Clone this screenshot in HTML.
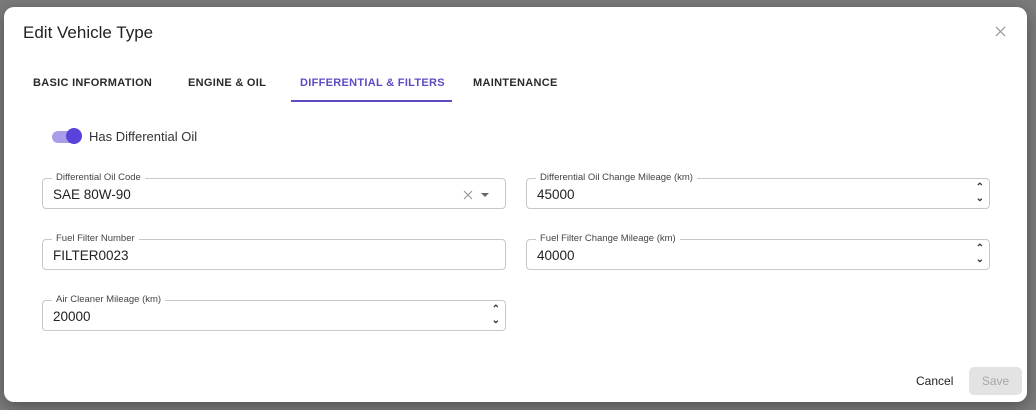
<!DOCTYPE html>
<html><head><style>
body{margin:0;width:1036px;height:410px;background:#7b7b7b;position:relative;overflow:hidden;font-family:"Liberation Sans",sans-serif;color:#1f1f1f}
.dlg{position:absolute;left:4px;top:7px;width:1023px;height:395px;background:#fff;border-radius:10px;box-shadow:0 4px 16px rgba(0,0,0,.35)}
.title{position:absolute;left:19px;top:16px;font-size:17px;color:#222}
.close{position:absolute;left:991px;top:19px}
.tab{position:absolute;top:70px;font-size:11px;font-weight:bold;color:#2a2a2a;letter-spacing:.3px}
.ind{position:absolute;left:287px;top:93px;width:161px;height:2px;background:#5b4cc4}
.sw{position:absolute;left:48px;top:124px;width:28px;height:12px;border-radius:6px;background:#a89ee8}
.knob{position:absolute;left:62px;top:121px;width:16px;height:16px;border-radius:50%;background:#5a43d8}
.swl{position:absolute;left:85px;top:122px;font-size:13px;color:#333}
.f{position:absolute;height:31px;border:1px solid #c8c8c8;border-radius:4px;box-sizing:border-box}
.f label{position:absolute;left:9px;top:-7px;background:#fff;padding:0 4px;font-size:9.5px;color:#444}
.f .v{position:absolute;left:10px;top:8px;font-size:13.5px;color:#222}
.sp{position:absolute;right:5px;top:3px;font-size:10px;line-height:11px;color:#333;font-weight:bold}
.btn{position:absolute;font-size:12px}
</style></head><body>
<div class="dlg">
<div class="title">Edit Vehicle Type</div>
<svg class="close" width="11" height="11" viewBox="0 0 12 12"><path d="M1 1L11 11M11 1L1 11" stroke="#999" stroke-width="1.3"/></svg>
<div class="tab" style="left:29px">BASIC INFORMATION</div>
<div class="tab" style="left:184px">ENGINE &amp; OIL</div>
<div class="tab" style="left:296px;color:#5b4cc4">DIFFERENTIAL &amp; FILTERS</div>
<div class="tab" style="left:469px">MAINTENANCE</div>
<div class="ind"></div>
<div class="sw"></div><div class="knob"></div>
<div class="swl">Has Differential Oil</div>
<div class="f" style="left:38px;top:171px;width:464px"><label>Differential Oil Code</label><div class="v">SAE 80W-90</div>
<svg style="position:absolute;left:420px;top:11px" width="10" height="10" viewBox="0 0 10 10"><path d="M1 1L9 9M9 1L1 9" stroke="#999" stroke-width="1.2"/></svg>
<svg style="position:absolute;left:438px;top:14px" width="8" height="4"><path d="M0 0H8L4 4Z" fill="#666"/></svg></div>
<div class="f" style="left:522px;top:171px;width:464px"><label>Differential Oil Change Mileage (km)</label><div class="v">45000</div><div class="sp">&#8963;<br>&#8964;</div></div>
<div class="f" style="left:38px;top:232px;width:464px"><label>Fuel Filter Number</label><div class="v">FILTER0023</div></div>
<div class="f" style="left:522px;top:232px;width:464px"><label>Fuel Filter Change Mileage (km)</label><div class="v">40000</div><div class="sp">&#8963;<br>&#8964;</div></div>
<div class="f" style="left:38px;top:293px;width:464px"><label>Air Cleaner Mileage (km)</label><div class="v">20000</div><div class="sp">&#8963;<br>&#8964;</div></div>
<div class="btn" style="left:912px;top:367px;color:#222">Cancel</div>
<div style="position:absolute;left:965px;top:360px;width:53px;height:28px;background:#e3e3e3;border-radius:5px;color:#a8a8a8;font-size:12px;text-align:center;line-height:28px">Save</div>
</div>
</body></html>
